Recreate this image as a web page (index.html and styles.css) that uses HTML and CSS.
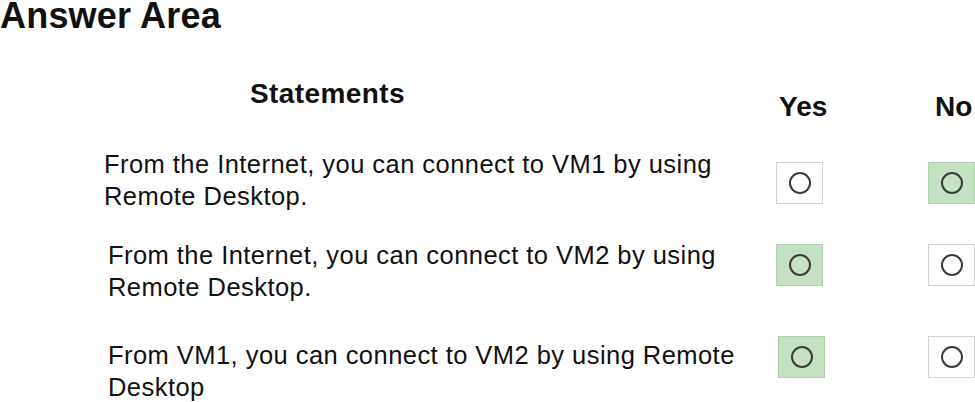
FILE: index.html
```html
<!DOCTYPE html>
<html lang="en">

<head>
  <meta charset="UTF-8" />
  <title>Answer Area</title>
  <link rel="stylesheet" href="styles.css">
</head>

<body>
  <h1 class="title">Answer Area</h1>

  <div class="answer-area">
    <div class="row head">
      <div class="head-statements">Statements</div>
      <div class="head-yes">Yes</div>
      <div class="head-no">No</div>
    </div>

    <div class="row row-1">
      <div class="statement">From the Internet, you can connect to VM1 by using Remote Desktop.</div>
      <div class="choice"><span class="circle"></span></div>
      <div class="choice selected"><span class="circle"></span></div>
    </div>

    <div class="row row-2">
      <div class="statement">From the Internet, you can connect to VM2 by using Remote Desktop.</div>
      <div class="choice selected"><span class="circle"></span></div>
      <div class="choice"><span class="circle"></span></div>
    </div>

    <div class="row row-3">
      <div class="statement">From VM1, you can connect to VM2 by using Remote Desktop</div>
      <div class="choice yes-shift selected"><span class="circle"></span></div>
      <div class="choice"><span class="circle"></span></div>
    </div>
  </div>
</body>

</html>
```

FILE: styles.css
```css
body {
  margin: 0;
  font-family: 'Liberation Sans', Arial, sans-serif;
  background: #ffffff;
  color: #111;
}

.title {
  margin: 0;
  font-size: 36px;
  line-height: 32px;
  font-weight: 700;
  letter-spacing: 0.2px;
}

.answer-area {
  padding-left: 104px;
}

.row {
  display: grid;
  grid-template-columns: 672px 152px 47px;
  align-items: start;
}

.head {
  margin-top: 46px;
  font-weight: 700;
  font-size: 28px;
  line-height: 32px;
}

.head-statements {
  padding-left: 146px;
  letter-spacing: 0.4px;
}

.head-yes {
  padding-top: 13px;
  padding-left: 3px;
}

.head-no {
  padding-top: 13px;
  padding-left: 7px;
}

.statement {
  font-size: 25.5px;
  line-height: 32px;
  letter-spacing: 0.45px;
}

.choice {
  width: 47px;
  height: 42px;
  box-sizing: border-box;
  border: 1px solid #d4d4d4;
  background: #fff;
  display: flex;
  align-items: center;
  justify-content: center;
}

.choice.selected {
  background: #c5e1c3;
  border-color: #b3cfb1;
}

.circle {
  width: 18px;
  height: 18px;
  border: 2px solid #3b3b3b;
  border-radius: 50%;
}

.row-1 {
  margin-top: 25px;
}

.row-1 .choice {
  margin-top: 14px;
}

.row-2 {
  margin-top: 27px;
}

.row-2 .statement,
.row-3 .statement {
  padding-left: 4px;
}

.row-2 .choice {
  margin-top: 5px;
}

.row-3 {
  margin-top: 33px;
}

.row-3 .statement {
  padding-top: 3px;
}

.yes-shift {
  margin-left: 2px;
}
```
